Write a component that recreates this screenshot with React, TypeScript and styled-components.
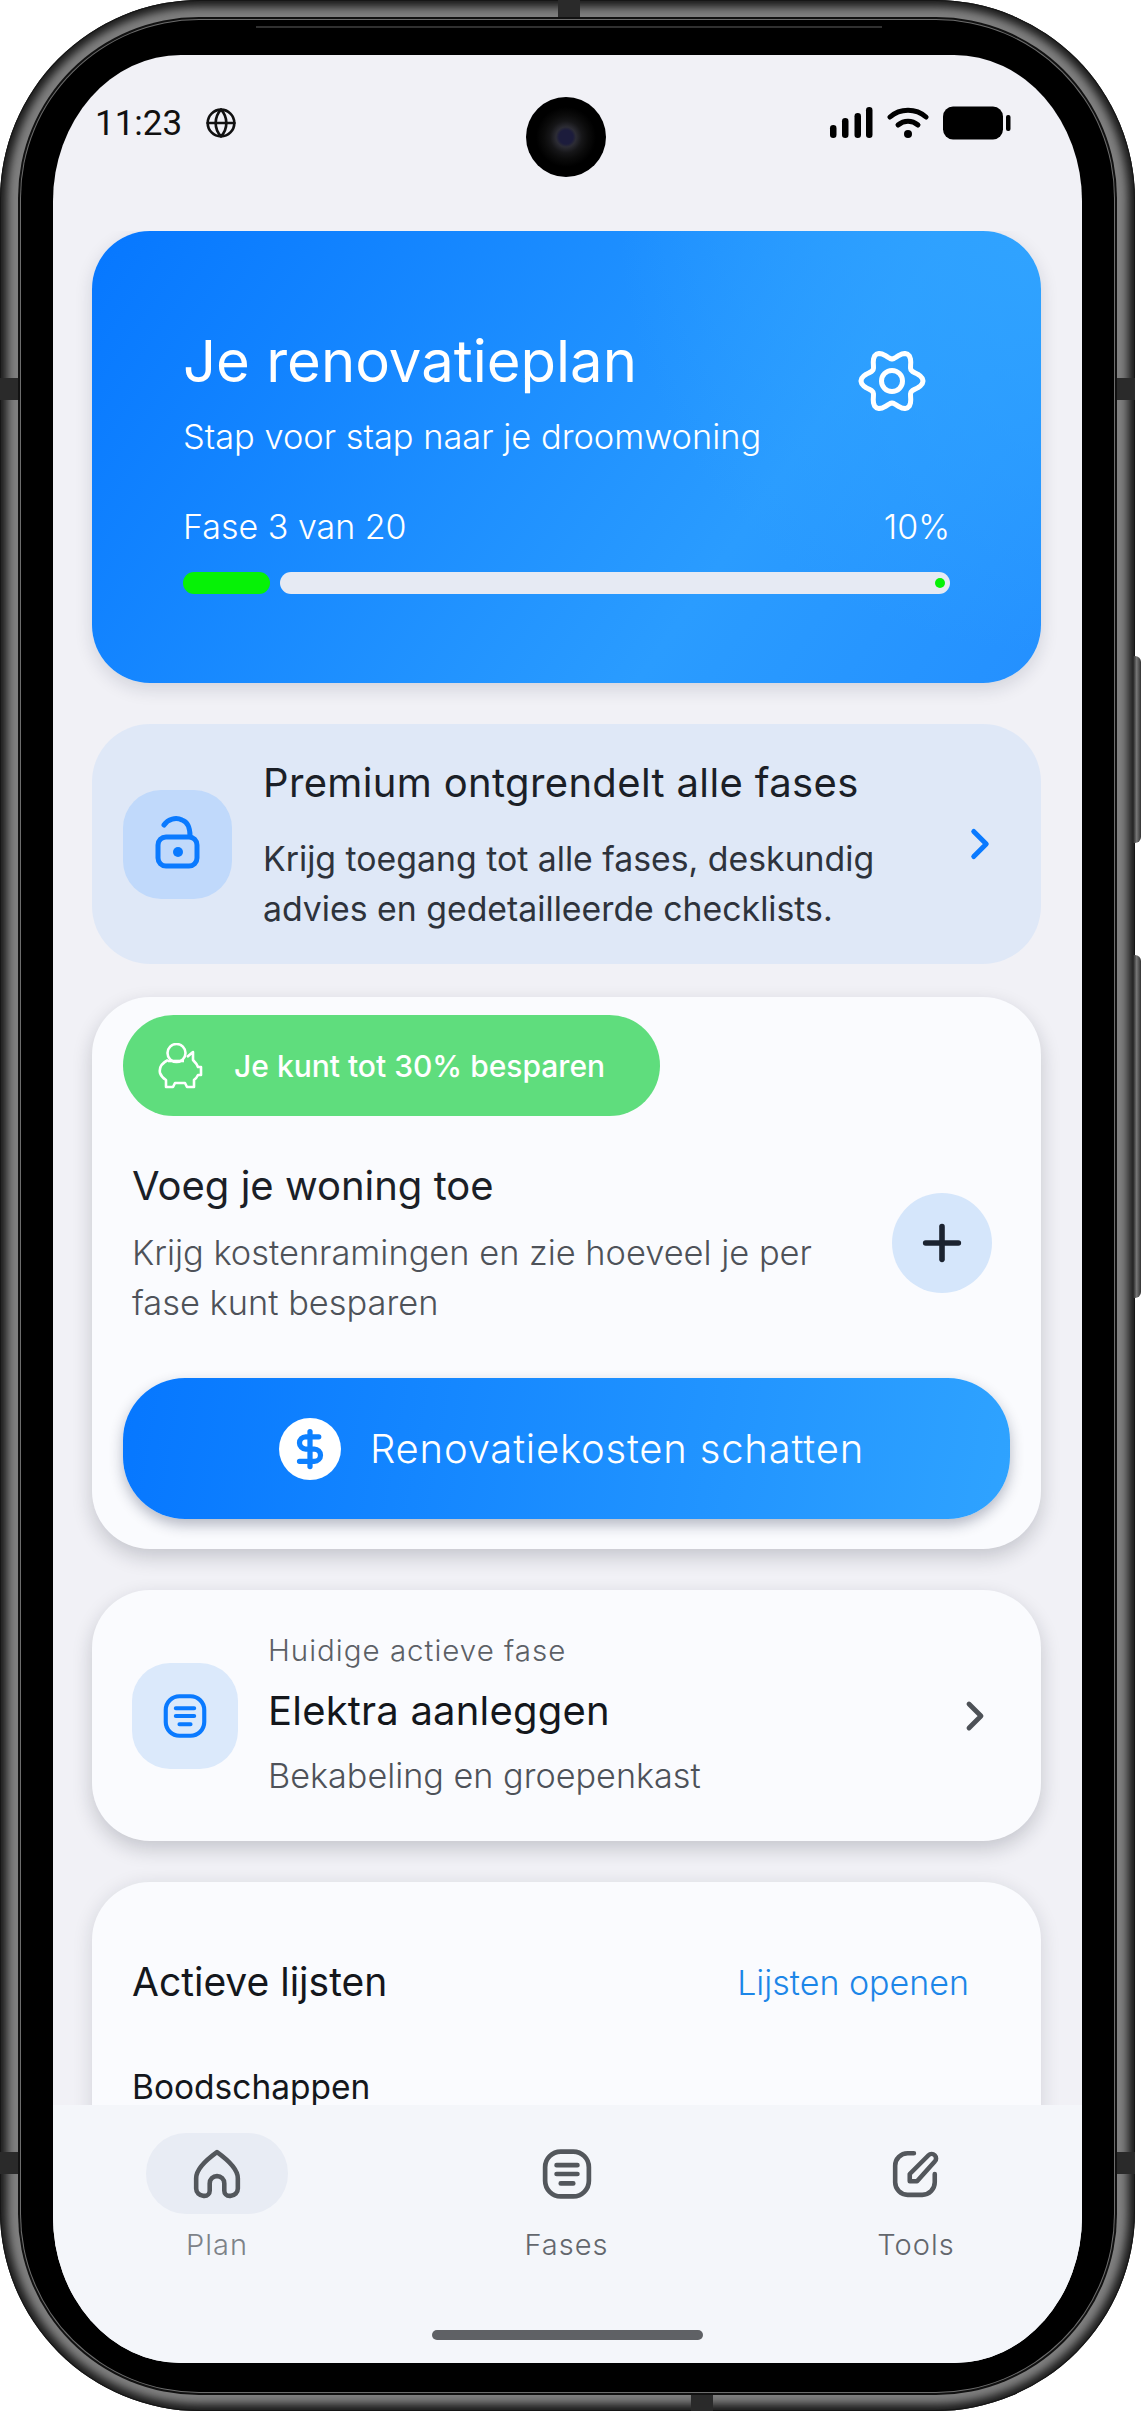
import React from 'react';
import styled, { createGlobalStyle } from 'styled-components';
import { ChevronRight, DollarSign, Globe, Plus } from 'lucide-react';

const GlobalStyle = createGlobalStyle`
  html, body {
    margin: 0;
    background: #fff;
    font-family: 'Inter', 'Liberation Sans', sans-serif;
  }
  * { box-sizing: border-box; }
`;

// wavy gear outline, six soft lobes
const gearPath = Array.from({ length: 72 }, (_, i) => {
  const a = (i * 5 * Math.PI) / 180;
  const r = 26.5 + 4.5 * Math.cos(6 * a);
  return `${i === 0 ? 'M' : 'L'}${(36 + r * Math.cos(a)).toFixed(2)} ${(36 + r * Math.sin(a)).toFixed(2)}`;
}).join(' ') + ' Z';

const Phone = styled.div`
  position: relative;
  width: 1135px;
  height: 2411px;
  padding: 20px 21px 19px;
  border-radius: 200px;
  background: #7f7f7f;
  box-shadow: inset 0 0 0 1px #161616, inset 0 0 9px 7px #1c1c1c;
`;

const Band = styled.span<{ $side: string; $at: number }>`
  position: absolute;
  background: #2a2a2a;
  ${p =>
    p.$side === 'top' || p.$side === 'bottom'
      ? `${p.$side}: 0; left: ${p.$at}px; width: 22px; height: 20px;`
      : `${p.$side}: 0; top: ${p.$at}px; width: 21px; height: 22px;`}
`;

const SideKey = styled.span<{ $top: number; $h: number }>`
  position: absolute;
  left: 1133px;
  top: ${p => p.$top}px;
  width: 8px;
  height: ${p => p.$h}px;
  border-radius: 0 6px 6px 0;
  background: linear-gradient(90deg, #222 0%, #777 45%, #333 100%);
`;

const Bezel = styled.div`
  position: relative;
  height: 100%;
  padding: 35px 32px 29px;
  border-radius: 178px;
  background: #000;
  box-shadow: 0 0 0 1px #6d6d6d, 0 0 0 3px #111;
`;

const TopLip = styled.span`
  position: absolute;
  top: 6px;
  left: 235px;
  width: 626px;
  height: 2px;
  background: #303030;
`;

const Screen = styled.div`
  position: relative;
  display: flex;
  flex-direction: column;
  height: 100%;
  overflow: hidden;
  border-radius: 128px / 146px;
  background: #f1f1f6;
`;

const Camera = styled.div`
  position: absolute;
  top: 42px;
  left: 473px;
  width: 80px;
  height: 80px;
  border-radius: 50%;
  background: radial-gradient(circle, #1c1c3c 0 7px, #2c2c34 10px, #161618 16px, #0b0b0b 22px, #000 30px);
`;

const StatusBar = styled.div`
  display: flex;
  flex: none;
  align-items: center;
  height: 176px;
  padding: 0 71px 40px 42px;
`;

const Clock = styled.span`
  margin-right: 23px;
  font-family: 'Roboto', sans-serif;
  font-size: 35px;
  color: #111;
`;

const StatusIcons = styled.div`
  display: flex;
  align-items: center;
  gap: 14px;
  margin-left: auto;
`;

const Content = styled.div`
  flex: 1;
  min-height: 0;
  padding: 0 41px 0 39px;
  overflow: hidden;
`;

const Hero = styled.section`
  height: 452px;
  margin-bottom: 41px;
  padding: 96px 91px 0;
  border-radius: 58px;
  color: #fff;
  background:
    radial-gradient(circle at 100% 0, #30a3ff 0, rgba(48, 163, 255, 0) 40%),
    linear-gradient(125deg, #0677ff 0%, #2a9cff 68%, #2490ff 100%);
  box-shadow: 0 6px 18px rgba(20, 30, 60, 0.14);
`;

const HeroTop = styled.div`
  display: flex;
  justify-content: space-between;
`;

const HeroTitle = styled.h1`
  margin: 0;
  font-size: 58px;
  font-weight: 400;
  line-height: 68px;
`;

const HeroSub = styled.p`
  margin: 18px 0 0;
  font-size: 34.4px;
  font-weight: 300;
  line-height: 48px;
`;

const GearIcon = styled.svg`
  flex: none;
  width: 72px;
  height: 72px;
  margin: 18px 22px 0 0;
`;

const Progress = styled.div`
  display: flex;
  justify-content: space-between;
  margin: 42px 0 21px;
  font-size: 34px;
  font-weight: 300;
  line-height: 48px;
`;

const Bar = styled.div`
  display: flex;
  gap: 10px;
  height: 22px;
`;

const BarDone = styled.span`
  flex: none;
  width: 87px;
  border-radius: 11px;
  background: #06f206;
`;

const BarRest = styled.span`
  display: flex;
  flex: 1;
  align-items: center;
  justify-content: flex-end;
  padding-right: 5px;
  border-radius: 11px;
  background: #e6eaf3;
`;

const BarDot = styled.span`
  width: 10px;
  height: 10px;
  border-radius: 50%;
  background: #06f206;
`;

const Premium = styled.section`
  display: flex;
  align-items: center;
  height: 240px;
  margin-bottom: 33px;
  padding: 0 36px 0 31px;
  border-radius: 58px;
  background: #dfe8f7;
`;

const IconBox = styled.div<{ $bg: string; $size: number }>`
  display: flex;
  flex: none;
  align-items: center;
  justify-content: center;
  width: ${p => p.$size}px;
  height: ${p => p.$size}px;
  border-radius: 38px;
  background: ${p => p.$bg};
`;

const RowText = styled.div<{ $gap: number }>`
  flex: 1;
  min-width: 0;
  margin-left: ${p => p.$gap}px;
`;

const CardTitle = styled.h2<{ $wide?: boolean }>`
  margin: 0;
  font-size: 40px;
  font-weight: 400;
  line-height: 56px;
  letter-spacing: ${p => (p.$wide ? '0.35px' : '0')};
  color: #1b1f27;
`;

const PremiumText = styled.p`
  margin: 23px 0 0;
  font-size: 33.8px;
  font-weight: 400;
  line-height: 50px;
  color: #2e333c;
`;

const SavingsCard = styled.section`
  margin-bottom: 41px;
  padding: 18px 31px 30px;
  border-radius: 58px;
  background: #fafbfe;
  box-shadow: 0 8px 20px rgba(20, 25, 40, 0.2);
`;

const SavingsPill = styled.div`
  display: flex;
  align-items: center;
  gap: 31px;
  width: 537px;
  height: 101px;
  padding-left: 35px;
  border-radius: 51px;
  font-size: 30px;
  font-weight: 500;
  color: #fff;
  background: #5fdd7d;
`;

const SavingsRow = styled.div`
  display: flex;
  align-items: center;
  justify-content: space-between;
  margin: 42px 0 50px;
  padding: 0 18px 0 9px;
`;

const SavingsText = styled.div`
  width: 720px;
`;

const Muted = styled.p`
  margin: 14px 0 0;
  font-size: 34.4px;
  font-weight: 300;
  line-height: 50px;
  color: #4e5259;
`;

const PlusButton = styled.div`
  display: flex;
  flex: none;
  align-items: center;
  justify-content: center;
  width: 100px;
  height: 100px;
  border-radius: 50%;
  color: #1b2330;
  background: #d5e6fb;
`;

const Cta = styled.div`
  display: flex;
  align-items: center;
  justify-content: center;
  gap: 29px;
  height: 141px;
  padding-left: 10px;
  border-radius: 62px;
  font-size: 40px;
  font-weight: 300;
  letter-spacing: 0.8px;
  color: #fff;
  background: linear-gradient(100deg, #0677ff 0%, #2fa3ff 100%);
  box-shadow: 0 6px 14px rgba(20, 30, 60, 0.3);
`;

const CoinBadge = styled.span`
  display: flex;
  align-items: center;
  justify-content: center;
  width: 62px;
  height: 62px;
  border-radius: 50%;
  color: #0d80ff;
  background: #fff;
`;

const PhaseCard = styled.section`
  display: flex;
  align-items: center;
  height: 251px;
  margin-bottom: 41px;
  padding: 0 42px 0 40px;
  border-radius: 58px;
  background: #fafbfe;
  box-shadow: 0 8px 20px rgba(20, 25, 40, 0.2);
`;

const PhaseLabel = styled.div`
  font-size: 29.5px;
  font-weight: 300;
  line-height: 40px;
  letter-spacing: 1px;
  color: #5c6066;
`;

const PhaseName = styled.div`
  margin: 13px 0 12px;
  font-size: 40px;
  font-weight: 400;
  line-height: 56px;
  letter-spacing: 0.2px;
  color: #14171c;
`;

const PhaseSub = styled.div`
  font-size: 34.2px;
  font-weight: 300;
  line-height: 50px;
  color: #4e5259;
`;

const ListsCard = styled.section`
  min-height: 300px;
  padding: 72px 72px 0 40px;
  border-radius: 58px;
  background: #fafbfe;
  box-shadow: 0 4px 20px rgba(20, 25, 40, 0.14);
`;

const ListsHead = styled.div`
  display: flex;
  align-items: center;
  justify-content: space-between;
  margin-bottom: 53px;
`;

const ListsTitle = styled.h2`
  margin: 0;
  font-size: 39px;
  font-weight: 400;
  line-height: 56px;
  color: #14171c;
`;

const ListsLink = styled.a`
  font-size: 34px;
  font-weight: 300;
  color: #1c86e8;
`;

const ListName = styled.div`
  font-size: 33.5px;
  font-weight: 400;
  line-height: 48px;
  color: #14171c;
`;

const BottomNav = styled.nav`
  flex: none;
  height: 258px;
  padding-top: 28px;
  background: #f4f6fa;
`;

const NavRow = styled.div`
  display: flex;
  justify-content: space-between;
  padding: 0 95px 0 93px;
`;

const NavItem = styled.div`
  display: flex;
  flex-direction: column;
  align-items: center;
  width: 142px;
`;

const NavIcon = styled.div<{ $active?: boolean }>`
  display: flex;
  align-items: center;
  justify-content: center;
  width: 142px;
  height: 81px;
  border-radius: 40px;
  background: ${p => (p.$active ? '#e8ecf4' : 'transparent')};
`;

const NavLabel = styled.span<{ $active?: boolean }>`
  margin-top: 11px;
  font-size: 29px;
  font-weight: 300;
  line-height: 40px;
  letter-spacing: 1px;
  color: ${p => (p.$active ? '#7d8288' : '#63676d')};
`;

const HomeBar = styled.div`
  width: 271px;
  height: 10px;
  margin: 65px auto 0;
  border-radius: 5px;
  background: #5f6165;
`;

function ListIcon({ color, size }: { color: string; size: number }) {
  return (
    <svg width={size} height={size} viewBox="0 0 48 48" fill="none" stroke={color} strokeWidth="4.5" strokeLinecap="round">
      <rect x="3" y="2.5" width="42" height="43" rx="15" />
      <path d="M14 15.5h20M14 24h20M18 33h12" />
    </svg>
  );
}

export default function App() {
  return (
    <>
      <GlobalStyle />
      <Phone>
        <Band $side="top" $at={558} />
        <Band $side="bottom" $at={691} />
        <Band $side="left" $at={378} />
        <Band $side="right" $at={378} />
        <Band $side="left" $at={2152} />
        <Band $side="right" $at={2152} />
        <SideKey $top={656} $h={187} />
        <SideKey $top={955} $h={343} />
        <Bezel>
          <TopLip />
          <Screen>
            <Camera />
            <StatusBar>
              <Clock>11:23</Clock>
              <Globe size={32} strokeWidth={2} color="#111" />
              <StatusIcons>
                <svg width="44" height="32" viewBox="0 0 44 32" fill="#000">
                  <rect x="1" y="18" width="6.5" height="13" rx="3.2" />
                  <rect x="13" y="11" width="6.5" height="20" rx="3.2" />
                  <rect x="25.5" y="6" width="6.5" height="25" rx="3.2" />
                  <rect x="37" y="0" width="6.5" height="31" rx="3.2" />
                </svg>
                <svg width="42" height="32" viewBox="0 0 42 32" fill="none" stroke="#000" strokeWidth="5" strokeLinecap="round">
                  <path d="M3 10c10-9 26-9 36 0" />
                  <path d="M11 18c6-5 14-5 20 0" />
                  <circle cx="21" cy="27" r="4" fill="#000" stroke="none" />
                </svg>
                <svg width="68" height="34" viewBox="0 0 68 34" fill="#000">
                  <rect x="0" y="0.5" width="60" height="33" rx="10" />
                  <rect x="63" y="9" width="4.5" height="16" rx="2" />
                </svg>
              </StatusIcons>
            </StatusBar>
            <Content>
              <Hero>
                <HeroTop>
                  <div>
                    <HeroTitle>Je renovatieplan</HeroTitle>
                    <HeroSub>Stap voor stap naar je droomwoning</HeroSub>
                  </div>
                  <GearIcon viewBox="0 0 72 72" fill="none" stroke="#fff" strokeWidth="5" strokeLinejoin="round">
                    <path d={gearPath} />
                    <circle cx="36" cy="36" r="10.5" />
                  </GearIcon>
                </HeroTop>
                <Progress>
                  <span>Fase 3 van 20</span>
                  <span>10%</span>
                </Progress>
                <Bar>
                  <BarDone />
                  <BarRest>
                    <BarDot />
                  </BarRest>
                </Bar>
              </Hero>

              <Premium>
                <IconBox $bg="#c0d9fb" $size={109}>
                  <svg width="56" height="60" viewBox="20 24 56 60" fill="none" stroke="#0a7aff" strokeWidth="5" strokeLinecap="round">
                    <rect x="28" y="47" width="39" height="29" rx="8" />
                    <path d="M34 35c4-6 12-8 18-5 6 2 8 8 8 16" />
                    <circle cx="48" cy="62" r="5" fill="#0a7aff" stroke="none" />
                  </svg>
                </IconBox>
                <RowText $gap={31}>
                  <CardTitle $wide>Premium ontgrendelt alle fases</CardTitle>
                  <PremiumText>
                    Krijg toegang tot alle fases, deskundig
                    <br />
                    advies en gedetailleerde checklists.
                  </PremiumText>
                </RowText>
                <ChevronRight size={50} strokeWidth={2.4} color="#0a7aff" />
              </Premium>

              <SavingsCard>
                <SavingsPill>
                  <svg width="45" height="46" viewBox="0 0 45 46" fill="none" stroke="#fff" strokeWidth="2.6" strokeLinejoin="round">
                    <circle cx="18.5" cy="10" r="9" />
                    <path d="M10 17C4 20 1 25 2 30c1 3 3 5 6 7v7h7l2-4h10l2 4h7v-7c2-1 3-3 4-5h3v-8h-3c-1-3-3-5-5-7V9l-6 5" />
                    <path d="M10 18h16" />
                  </svg>
                  Je kunt tot 30% besparen
                </SavingsPill>
                <SavingsRow>
                  <SavingsText>
                    <CardTitle>Voeg je woning toe</CardTitle>
                    <Muted>Krijg kostenramingen en zie hoeveel je per fase kunt besparen</Muted>
                  </SavingsText>
                  <PlusButton>
                    <Plus size={56} strokeWidth={2.4} />
                  </PlusButton>
                </SavingsRow>
                <Cta>
                  <CoinBadge>
                    <DollarSign size={42} strokeWidth={3} />
                  </CoinBadge>
                  Renovatiekosten schatten
                </Cta>
              </SavingsCard>

              <PhaseCard>
                <IconBox $bg="#dbe9fb" $size={106}>
                  <ListIcon color="#0a7aff" size={44} />
                </IconBox>
                <RowText $gap={30}>
                  <PhaseLabel>Huidige actieve fase</PhaseLabel>
                  <PhaseName>Elektra aanleggen</PhaseName>
                  <PhaseSub>Bekabeling en groepenkast</PhaseSub>
                </RowText>
                <ChevronRight size={48} strokeWidth={2.4} color="#4d5157" />
              </PhaseCard>

              <ListsCard>
                <ListsHead>
                  <ListsTitle>Actieve lijsten</ListsTitle>
                  <ListsLink>Lijsten openen</ListsLink>
                </ListsHead>
                <ListName>Boodschappen</ListName>
              </ListsCard>
            </Content>
            <BottomNav>
              <NavRow>
                <NavItem>
                  <NavIcon $active>
                    <svg width="52" height="50" viewBox="0 0 48 48" fill="none" stroke="#53575c" strokeWidth="4.4" strokeLinejoin="round">
                      <path d="M24 3C31 8 44 18 44 28V38a7 7 0 0 1-7 7h-1a5 5 0 0 1-5-5v-7a7 7 0 0 0-14 0v7a5 5 0 0 1-5 5h-1a7 7 0 0 1-7-7V28C4 18 17 8 24 3Z" />
                    </svg>
                  </NavIcon>
                  <NavLabel $active>Plan</NavLabel>
                </NavItem>
                <NavItem>
                  <NavIcon>
                    <ListIcon color="#53575c" size={50} />
                  </NavIcon>
                  <NavLabel>Fases</NavLabel>
                </NavItem>
                <NavItem>
                  <NavIcon>
                    <svg width="52" height="50" viewBox="0 0 48 48" fill="none" stroke="#53575c" strokeWidth="4.4" strokeLinecap="round" strokeLinejoin="round">
                      <path d="M22 4H16A12 12 0 0 0 4 16V32A12 12 0 0 0 16 44H30A12 12 0 0 0 42 32V24" />
                      <path d="M18 31V24L36 6a4.2 4.2 0 0 1 6 6L25 31Z" />
                    </svg>
                  </NavIcon>
                  <NavLabel>Tools</NavLabel>
                </NavItem>
              </NavRow>
              <HomeBar />
            </BottomNav>
          </Screen>
        </Bezel>
      </Phone>
    </>
  );
}
